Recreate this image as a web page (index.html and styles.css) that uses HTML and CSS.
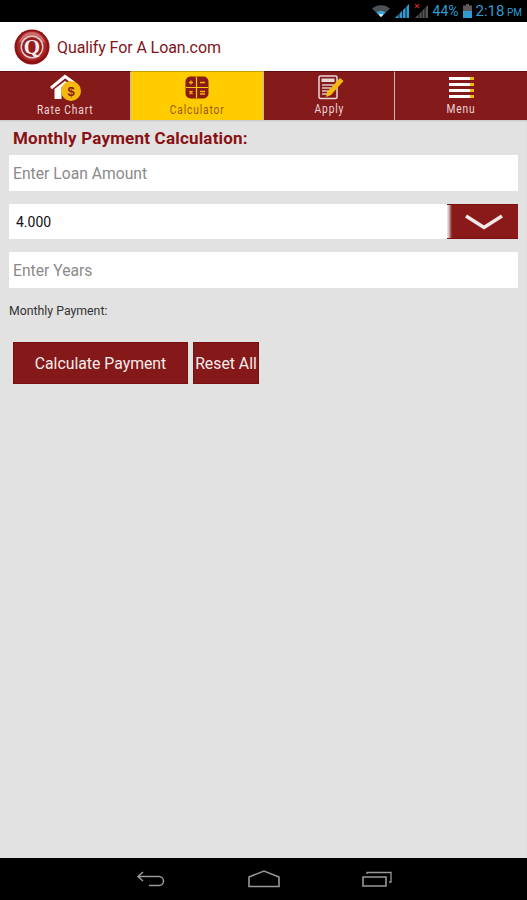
FILE: index.html
```html
<!DOCTYPE html>
<html lang="en">
<head>
<meta charset="utf-8">
<title>Qualify For A Loan.com</title>
<link rel="stylesheet" href="styles.css">
</head>
<body>
<div class="screen">
  <div class="status">
    <svg class="st-wifi" width="18" height="12" viewBox="0 0 18 12"><path d="M0 3.500C5-1 13-1 18 3.500L9 12z" fill="#4a5358"/><path d="M4.500 7.500c2.700-2 6.300-2 9 0L9 12z" fill="#39a6d8"/><path d="M6.500 9.500c1.500-.8 3.500-.8 5 0L9 12z" fill="#d8f0fa"/></svg>
    <svg class="st-sig1" width="14" height="14" viewBox="0 0 14 14"><path d="M0 14L14 0v14z" fill="#2f9bd0"/><path d="M4 14V9M7.500 14V6M11 14V2" stroke="#000" stroke-width=".8"/></svg>
    <svg class="st-sig2" width="13" height="14" viewBox="0 0 13 14"><path d="M0 14L13 1v13z" fill="#565656"/><path d="M4 14V9M7 14V6M10 14V3" stroke="#000" stroke-width=".8"/><path d="M0 0l4 4M4 0L0 4" stroke="#c22" stroke-width="1.200"/></svg>
    <span class="st-pct">44%</span>
    <svg class="st-bat" width="9" height="14" viewBox="0 0 9 14"><rect x="3" width="3" height="2" fill="#5a5a5a"/><rect y="1.500" width="9" height="6" fill="#5a5a5a"/><rect y="7" width="9" height="7" fill="#2f9bd0"/></svg>
    <span class="st-time">2:18<small> PM</small></span>
  </div>

  <header class="brand">
    <svg class="logo" width="36" height="36" viewBox="0 0 36 36">
      <circle cx="18" cy="18" r="17.500" fill="#8c1214"/>
      <circle cx="18" cy="17" r="15" fill="#a92526"/>
      <path d="M5 14C7 6 13 3 18 3s11 3 13 11C25 10 11 10 5 14z" fill="#d06a6a"/>
      <circle cx="18" cy="18" r="11.500" fill="#d8c8c8"/>
      <circle cx="18" cy="18" r="10" fill="#971a1c"/>
      <text x="18" y="25" class="logo-q" text-anchor="middle">Q</text>
    </svg>
    <span class="brand-name">Qualify For A Loan.com</span>
  </header>

  <nav class="tabs">
    <div class="tab tab-low">
      <svg class="tab-icon" width="33" height="28" viewBox="0 0 33 28">
        <path d="M2 15L16 3.500 25 10" fill="none" stroke="#fff" stroke-width="3"/>
        <path d="M5.500 16L16 8l6 4v14H5.500z" fill="#fff"/>
        <path d="M12.500 26V14l9-1v13z" fill="#851a1a"/>
        <circle cx="22" cy="18" r="10" fill="#f5b80f"/>
        <text x="22" y="22.700" class="dollar" text-anchor="middle">$</text>
      </svg>
      <span class="tab-label">Rate Chart</span>
    </div>
    <div class="tab tab-low tab-active">
      <svg class="tab-icon calc-icon" width="24" height="23" viewBox="0 0 24 23">
        <rect width="23" height="22" x=".5" y=".5" rx="5" fill="#8a1a1a"/>
        <path d="M11.500 1v21M1 11.500h22" stroke="#ffcc00" stroke-width="1.200"/>
        <path d="M4 6.500h4M6 4.500v4M15 6.500h5M4.500 15l3 3M7.500 15l-3 3M15 15.500h5M15 18h5" stroke="#f0b800" stroke-width="1.300"/>
      </svg>
      <span class="tab-label">Calculator</span>
    </div>
    <div class="tab">
      <svg class="tab-icon apply-icon" width="26" height="25" viewBox="0 0 26 25">
        <rect x="1" y="1" width="18" height="22.500" rx="1.500" fill="none" stroke="#e8d8d8" stroke-width="1.500"/>
        <rect x="3.500" y="3.500" width="13" height="3.500" fill="#e8d8d8"/>
        <path d="M4 10h12M4 13h9M4 16h7M4 19h5" stroke="#e0c8c8" stroke-width="1.300"/>
        <path d="M9 17L22 3l3.500 3L13 20l-5 2z" fill="#f5b80f"/>
      </svg>
      <span class="tab-label">Apply</span>
    </div>
    <div class="tab">
      <span class="menu-icon">
        <i></i><i></i><i></i><i></i>
      </span>
      <span class="tab-label">Menu</span>
    </div>
  </nav>

  <main class="content">
    <h1 class="title">Monthly Payment Calculation:</h1>
    <input class="field" type="text" placeholder="Enter Loan Amount">
    <div class="rate-row">
      <input class="field rate" type="text" value="4.000">
      <button class="rate-btn" type="button" aria-label="Choose rate">
        <svg width="40" height="16" viewBox="0 0 40 16"><path d="M2 2l18 11.500L38 2" fill="none" stroke="#f3e8e8" stroke-width="3.500"/></svg>
      </button>
    </div>
    <input class="field years" type="text" placeholder="Enter Years">
    <p class="result">Monthly Payment:</p>
    <div class="actions">
      <button class="btn btn-calc" type="button">Calculate Payment</button>
      <button class="btn btn-reset" type="button">Reset All</button>
    </div>
  </main>

  <footer class="sysnav">
    <svg width="30" height="18" viewBox="0 0 30 18"><path d="M7 2L2 6.500 7 11M2 6.500h21c6 0 6 9 0 9h-10" fill="none" stroke="#999" stroke-width="1.500"/></svg>
    <svg width="32" height="18" viewBox="0 0 32 18"><path d="M1 7L16 1l15 6v9.500H1z" fill="none" stroke="#999" stroke-width="1.600"/></svg>
    <svg width="30" height="16" viewBox="0 0 30 16"><path d="M1 6h23v9H1z" fill="none" stroke="#999" stroke-width="1.600"/><path d="M5 3V1.500h24V11h-2" fill="none" stroke="#999" stroke-width="1.300"/></svg>
  </footer>
</div>
</body>
</html>
```
FILE: styles.css
```css
* { box-sizing: border-box; }
html, body { margin: 0; padding: 0; }
body { font-family: Roboto, "Liberation Sans", sans-serif; background: #e2e2e2; }
.screen { width: 527px; height: 900px; display: flex; flex-direction: column; overflow: hidden; }

.status { height: 22px; background: #000; display: flex; align-items: center; justify-content: flex-end; padding-right: 5px; color: #2f9bd0; flex: none; }
.st-wifi { margin-right: 5px; }
.st-sig1 { margin-right: 6px; }
.st-sig2 { margin-right: 5px; }
.st-pct { font-size: 14px; margin-right: 4px; }
.st-bat { margin-right: 4px; }
.st-time { font-size: 15px; }
.st-time small { font-size: 10px; }

.brand { height: 49px; background: #fff; display: flex; align-items: center; padding: 1px 0 0 14px; flex: none; }
.logo { margin-right: 7px; }
.logo-q { font-family: "Liberation Serif", serif; font-size: 21px; font-weight: 700; fill: #f4eeee; }
.brand-name { font-size: 16px; color: #80151a; letter-spacing: -.1px; }

.tabs { height: 49px; display: grid; grid-template-columns: 131px 133px 131px 132px; background: #c8c8c8; flex: none; }
.tab { background: #851a1a; display: flex; flex-direction: column; align-items: center; justify-content: flex-end; padding-bottom: 4px; border-right: 1px solid #c4b8b8; border-top: 1px solid #5e1010; color: #ecd8d8; }
.tab:last-child { border-right: 0; }
.tab-low { padding-bottom: 3px; }
.tab-active { background: #ffcc00; color: #9a5a10; border-top-color: #c8a000; }
.tab-icon { display: block; margin-bottom: 2px; }
.calc-icon { margin-bottom: 4px; }
.apply-icon { margin-left: 3px; }
.tab-label { font-size: 12px; line-height: 14px; letter-spacing: 1px; white-space: nowrap; transform: scaleX(.85); }
.dollar { font-family: "Liberation Sans", sans-serif; font-size: 13px; font-weight: 700; fill: #8a1a1a; }
.menu-icon { display: flex; flex-direction: column; gap: 2.500px; width: 25px; margin-bottom: 4px; }
.menu-icon i { display: block; height: 3.500px; background: linear-gradient(to right, #fff 84%, #f5b80f 84%); }

.content { flex: 1; background: #e2e2e2; padding: 0 9px; box-shadow: inset 0 2px 2px -1px #c4c4c4; }
.title { margin: 8px 0 6px 4px; font-size: 17px; line-height: 21px; font-weight: 700; color: #8a1113; letter-spacing: .2px; }
.field { display: block; width: 509px; height: 36px; padding: 0 4px; border: 0; outline: 0; background: #fff; font-family: Roboto, "Liberation Sans", sans-serif; font-size: 15.700px; color: #111; }
.field::placeholder { color: #8a8a8a; opacity: 1; }
.rate-row { display: flex; margin-top: 13px; height: 35px; }
.rate { width: 438px; height: 35px; padding-left: 7px; font-size: 14px; }
.rate-btn { width: 71px; height: 35px; margin: 0; padding: 0 0 0 2px; border: 0; display: flex; align-items: center; justify-content: center; background: linear-gradient(to right, #e2e2e2 1px, #8a1a1a 5px); }
.rate-btn { border-top: 1px solid #7c1010; border-bottom: 1px solid #7c1010; }
.years { margin-top: 13px; }
.result { margin: 16px 0 0; font-size: 12.300px; line-height: 14px; color: #333; }
.actions { display: flex; margin: 24px 0 0 4px; gap: 5px; }
.btn { height: 42px; padding: 0; background: #851818; border: 1px solid #7a0f0f; color: #f5ecec; font-family: Roboto, "Liberation Sans", sans-serif; font-size: 15.800px; }
.btn-calc { width: 175px; }
.btn-reset { width: 66px; }

.sysnav { height: 42px; background: #000; display: flex; align-items: center; flex: none; padding: 0 135px 0 136px; justify-content: space-between; }
```
